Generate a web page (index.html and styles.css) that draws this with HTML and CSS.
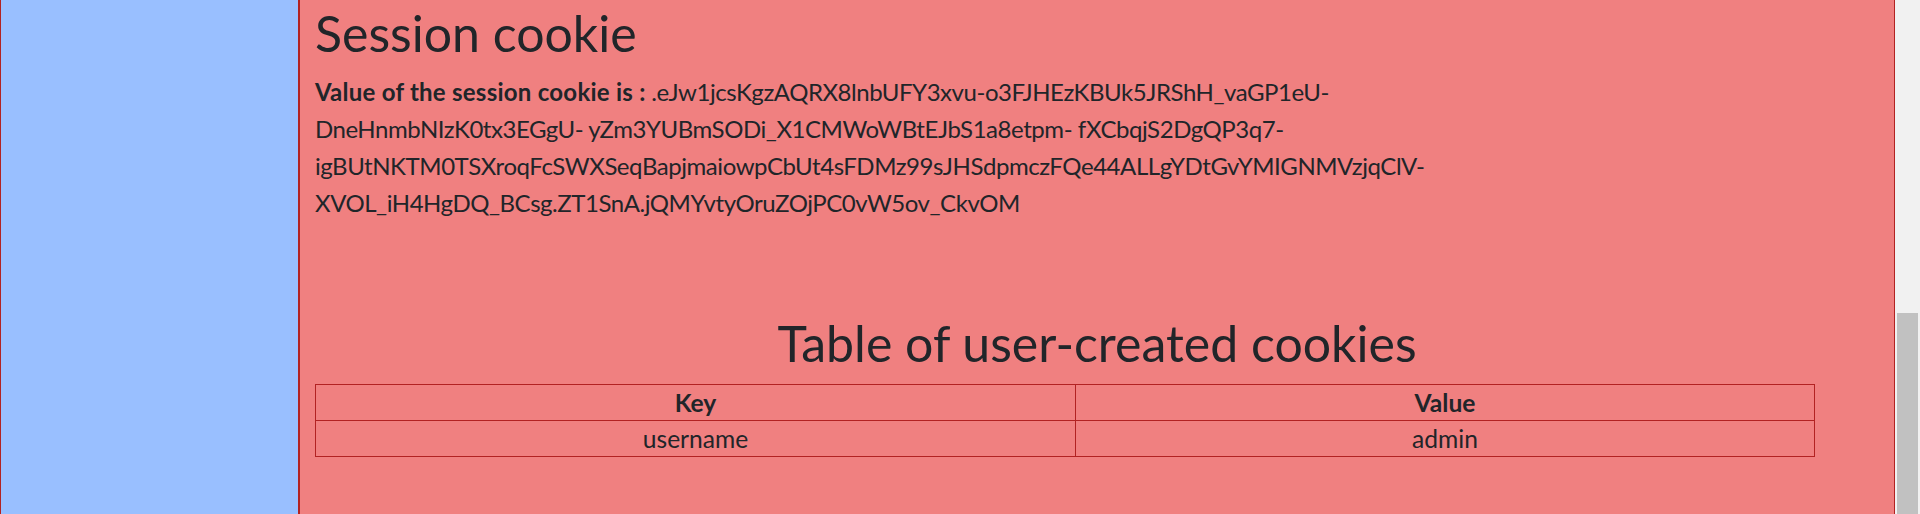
FILE: index.html
```html
<!DOCTYPE html>
<html lang="en">
<head>
<meta charset="utf-8">
<title>Session cookie</title>
<link rel="stylesheet" href="styles.css">
</head>
<body>
<div class="page">
  <aside class="sidebar"></aside>
  <main class="main">
    <h1 class="title">Session cookie</h1>
    <p class="session"><b>Value of the session cookie is :</b> .eJw1jcsKgzAQRX8lnbUFY3xvu-o3FJHEzKBUk5JRShH_vaGP1eU-DneHnmbNIzK0tx3EGgU- yZm3YUBmSODi_X1CMWoWBtEJbS1a8etpm- fXCbqjS2DgQP3q7-igBUtNKTM0TSXroqFcSWXSeqBapjmaiowpCbUt4sFDMz99sJHSdpmczFQe44ALLgYDtGvYMIGNMVzjqClV-XVOL_iH4HgDQ_BCsg.ZT1SnA.jQMYvtyOruZOjPC0vW5ov_CkvOM</p>
    <h1 class="title title-center">Table of user-created cookies</h1>
    <table class="cookies">
      <colgroup><col class="col-key"><col class="col-value"></colgroup>
      <thead><tr><th>Key</th><th>Value</th></tr></thead>
      <tbody><tr><td>username</td><td>admin</td></tr></tbody>
    </table>
  </main>
  <div class="scrollbar"><div class="thumb"></div></div>
</div>
</body>
</html>
```
FILE: styles.css
```css
html, body {
  margin: 0;
  padding: 0;
}
body {
  font-family: Lato, "Open Sans", sans-serif;
  color: #212529;
  background: #ffffff;
}
.page {
  display: flex;
  height: 514px;
  overflow: hidden;
}
.sidebar {
  flex: none;
  width: 297px;
  background: #99bfff;
  border-left: 1px solid #b22222;
  border-right: 1px solid #b22222;
}
.main {
  flex: none;
  width: 1564px;
  padding: 0 15px;
  background: #f08080;
  border-left: 1px solid #b22222;
  border-right: 1px solid #b22222;
}
.title {
  margin: 2px 0 10px 0;
  font-size: 50px;
  font-weight: 400;
  line-height: 62px;
}
.title-center {
  margin-top: 0;
  text-align: center;
}
.session {
  margin: 0 0 90px 0;
  max-width: 1200px;
  font-size: 24px;
  letter-spacing: -0.45px;
  line-height: 36.9px;
}
.session b {
  font-weight: 700;
  letter-spacing: 0.25px;
}
.cookies {
  width: 1500px;
  border-collapse: collapse;
  font-size: 24.6px;
  line-height: 35px;
}
.col-key {
  width: 760px;
}
.cookies th,
.cookies td {
  border: 1px solid #b22222;
  padding: 0;
  text-align: center;
}
.cookies th {
  font-weight: 700;
}
.scrollbar {
  flex: none;
  width: 21px;
  padding: 0 2px;
  background: #f1f1f1;
  display: flex;
  flex-direction: column;
}
.thumb {
  margin-top: 313px;
  flex: 1;
  background: #c1c1c1;
}
```
